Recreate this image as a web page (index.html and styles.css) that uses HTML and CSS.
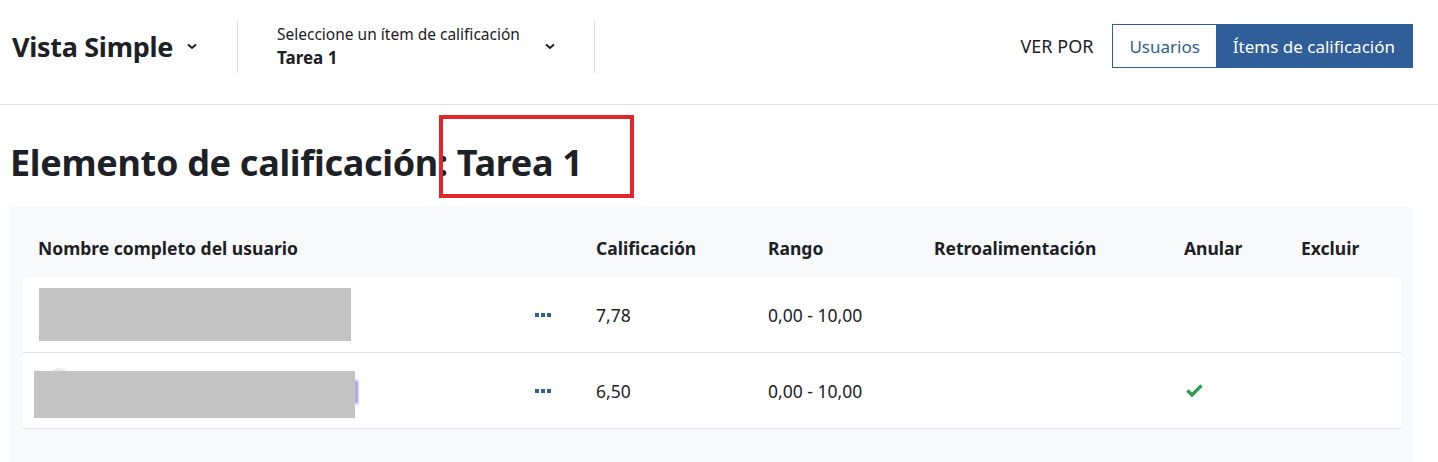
FILE: index.html
```html
<!DOCTYPE html>
<html lang="es">
<head>
  <meta charset="UTF-8" />
  <title>Vista Simple - Tarea 1</title>
  <meta name="viewport" content="width=device-width, initial-scale=1.0" />
  <link rel="stylesheet" href="styles.css">
</head>
<body>

  <div class="topbar">
    <div class="report-select">
      <span class="report-title">Vista Simple</span>
      <svg class="chevron" width="10" height="7" viewBox="0 0 10 7"><path d="M1 1.5 L5 5 L9 1.5" fill="none" stroke="#1d2125" stroke-width="2"/></svg>
    </div>
    <div class="item-select">
      <div class="item-text">
        <span class="item-label">Seleccione un ítem de calificación</span>
        <span class="item-value">Tarea 1</span>
      </div>
      <svg class="chevron" width="10" height="7" viewBox="0 0 10 7"><path d="M1 1.5 L5 5 L9 1.5" fill="none" stroke="#1d2125" stroke-width="2"/></svg>
    </div>
    <div class="view-by">
      <span class="view-label">VER POR</span>
      <div class="btn-group">
        <button class="btn btn-outline">Usuarios</button>
        <button class="btn btn-active">Ítems de calificación</button>
      </div>
    </div>
  </div>

  <div class="page">
    <h1 class="page-title">Elemento de calificación: Tarea 1</h1>
    <div class="highlight"></div>

    <div class="grade-panel">
      <div class="grade-row grade-head">
        <div class="cell">Nombre completo del usuario</div>
        <div class="cell">Calificación</div>
        <div class="cell">Rango</div>
        <div class="cell">Retroalimentación</div>
        <div class="cell">Anular</div>
        <div class="cell">Excluir</div>
      </div>

      <div class="grade-row">
        <div class="cell name-cell">
          <div class="redacted redacted-one"></div>
          <span class="dots"><i></i><i></i><i></i></span>
        </div>
        <div class="cell">7,78</div>
        <div class="cell">0,00 - 10,00</div>
        <div class="cell"></div>
        <div class="cell"></div>
        <div class="cell"></div>
      </div>

      <div class="grade-row">
        <div class="cell name-cell">
          <div class="avatar-wrap">
            <span class="avatar-ring"></span>
            <span class="avatar-edge"></span>
            <div class="redacted redacted-two"></div>
          </div>
          <span class="dots"><i></i><i></i><i></i></span>
        </div>
        <div class="cell">6,50</div>
        <div class="cell">0,00 - 10,00</div>
        <div class="cell"></div>
        <div class="cell">
          <svg class="check" width="17" height="13" viewBox="0 0 17 13"><path d="M1.5 6.5 L6 11 L15.5 1.5" fill="none" stroke="#2a9d4f" stroke-width="3.2"/></svg>
        </div>
        <div class="cell"></div>
      </div>
    </div>
  </div>

</body>
</html>
```

FILE: styles.css
```css
body {
  margin: 0;
  font-family: "Noto Sans", "Open Sans", sans-serif;
  font-size: 17.5px;
  color: #1d2125;
  background: #fff;
  overflow: hidden;
}

/* Top bar */
.topbar {
  height: 105px;
  box-sizing: border-box;
  border-bottom: 1px solid #dee2e6;
  display: flex;
  align-items: center;
  padding: 0 25px 12px 12px;
}

.report-select {
  display: flex;
  align-items: center;
  gap: 14px;
  padding-right: 40px;
  height: 53px;
  border-right: 1px solid #dee2e6;
}

.report-title {
  font-size: 27px;
  font-weight: 700;
  letter-spacing: -0.3px;
}

.chevron {
  display: block;
}

.item-select {
  display: flex;
  align-items: center;
  height: 53px;
  padding: 0 39px;
  border-right: 1px solid #dee2e6;
}

.item-text {
  display: flex;
  flex-direction: column;
  width: 268px;
}

.item-label {
  font-size: 15.5px;
  line-height: 24px;
}

.item-value {
  font-size: 17px;
  font-weight: 700;
  line-height: 24px;
}

.view-by {
  margin-left: auto;
  display: flex;
  align-items: center;
  gap: 19px;
}

.view-label {
  font-size: 18px;
}

.btn-group {
  display: flex;
}

.btn {
  font-family: inherit;
  font-size: 17px;
  height: 44px;
  padding: 0 16px;
  border: 1px solid #2f5e99;
  margin: 0;
  cursor: pointer;
}

.btn-outline {
  background: #fff;
  color: #2f5e99;
}

.btn-active {
  background: #2f5e99;
  color: #fff;
  padding: 0 17px 0 15px;
}

/* Page */
.page {
  position: relative;
  padding: 0 25px 0 10px;
}

.page-title {
  margin: 0;
  padding: 32px 0 18px;
  font-size: 36px;
  font-weight: 700;
  line-height: 52px;
  letter-spacing: -0.3px;
}

.highlight {
  position: absolute;
  left: 439px;
  top: 10px;
  width: 187px;
  height: 75px;
  border: 4px solid #e3262b;
}

.grade-panel {
  background: #f8f9fa;
  padding: 13px 12px 40px 13px;
}

.grade-row {
  display: grid;
  grid-template-columns: 558px 172px 166px 250px 117px 115px;
  align-items: center;
  height: 75px;
  background: #fff;
  border-bottom: 1px solid #dee2e6;
}

.grade-head {
  height: 57px;
  box-sizing: border-box;
  padding-bottom: 2px;
  background: transparent;
  border-bottom: none;
  font-weight: 700;
}

.cell {
  padding-left: 15px;
}

.name-cell {
  display: flex;
  align-items: center;
  justify-content: space-between;
  padding-right: 30px;
}

.redacted {
  background: #c3c3c3;
}

.redacted-one {
  width: 312px;
  height: 53px;
  margin-left: 1px;
}

.avatar-wrap {
  position: relative;
  margin-left: -4px;
  margin-top: 8px;
}

.avatar-ring {
  position: absolute;
  left: 14px;
  top: -3px;
  width: 22px;
  height: 22px;
  border-radius: 50%;
  background: #e9edf2;
}

.avatar-edge {
  position: absolute;
  right: -3px;
  top: 9px;
  width: 3px;
  height: 24px;
  border-radius: 2px;
  background: #6a64d8;
  opacity: 0.75;
  filter: blur(1.2px);
}

.redacted-two {
  position: relative;
  width: 321px;
  height: 47px;
}

.dots {
  display: flex;
  gap: 2px;
}

.dots i {
  width: 4px;
  height: 4px;
  background: #2f5e99;
}

.check {
  display: block;
  margin-left: 2px;
}
```
